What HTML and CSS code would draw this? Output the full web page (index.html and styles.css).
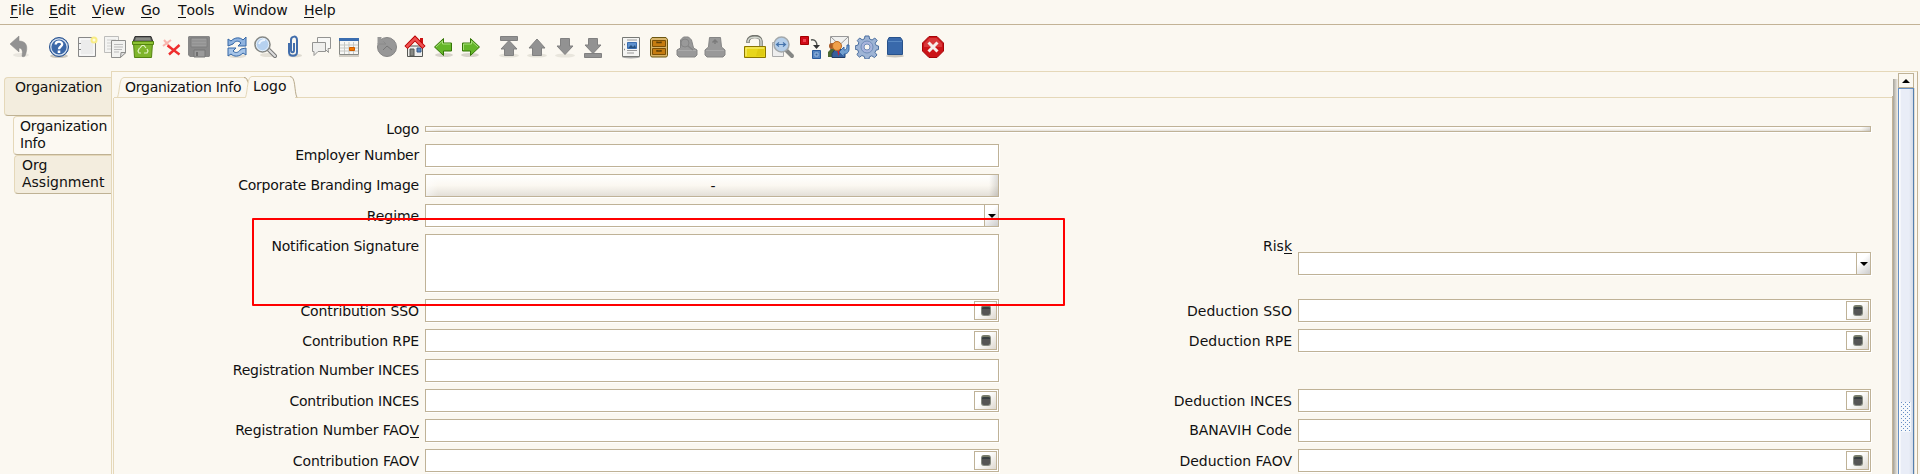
FILE: index.html
```html
<!DOCTYPE html>
<html lang="en">
<head>
<meta charset="utf-8">
<title>Organization</title>
<link rel="stylesheet" href="styles.css">
</head>
<body>
<nav class="menubar">
<span class="m1"><u>F</u>ile</span><span class="m2"><u>E</u>dit</span><span class="m3"><u>V</u>iew</span><span class="m4"><u>G</u>o</span><span class="m5"><u>T</u>ools</span><span class="m6">Window</span><span class="m7"><u>H</u>elp</span>
</nav>
<div class="toolbar">
<svg viewBox="0 0 24 24"><ellipse cx="14" cy="20" rx="8" ry="2" fill="#e9e6df"/><path d="M3 9 12 1v5c7 0 10 5 6 15-1 1-3 1-3 0 1-5 0-8-3-8v4z" fill="#929292" stroke="#858585" stroke-width=".5"/></svg>
<svg class="sep" viewBox="0 0 24 24"><ellipse cx="12" cy="21" rx="9" ry="2" fill="#ccc8be"/><circle cx="12" cy="12" r="9.5" fill="#3c68a8" stroke="#2b5591"/><circle cx="12" cy="12" r="8.2" fill="none" stroke="#dce6f2" stroke-width="1.2"/><path d="M8.7 9.5C8.8 5.7 15.2 5.8 15.2 9.3c0 2.2-3.2 2.3-3.2 5" fill="none" stroke="#fff" stroke-width="2.3"/><path d="M10.7 15.5h2.6V18h-2.6z" fill="#fff"/></svg>
<svg viewBox="0 0 24 24"><path d="M3.500 2.500h17v19h-17z" fill="#ececec" stroke="#888"/><path d="M5 4h14v16H5z" fill="none" stroke="#fff"/><path d="M5 8v1M5 14v1" stroke="#888" stroke-width="2"/><circle cx="19" cy="5" r="3.500" fill="#f8ec85"/><circle cx="19" cy="5" r="1.500" fill="#fffbe0"/></svg>
<svg viewBox="0 0 24 24"><path d="M1.500 1.500h14v16h-14z" fill="#f4f4f2" stroke="#bdbdbb"/><path d="M4 5h9M4 8h5M4 11h4M4 14h4" stroke="#d0d0ce"/><path d="M8.500 5.500h14v12l-5 5h-9z" fill="#f2f2f0" stroke="#8f8f8d"/><path d="M11 9.500h9M11 12h9M11 14.500h8M11 17h5" stroke="#bbb"/><path d="m17.500 22.500.500-5h5z" fill="#ddd" stroke="#8f8f8d"/></svg>
<svg viewBox="0 0 24 24"><path d="M2.500 8h19l-1 14.500h-17z" fill="#7fb52b" stroke="#548410"/><path d="M4 1.500h16l2 5.500H2z" fill="#555753" stroke="#333"/><path d="M5 2.500h14l1 3H4z" fill="#888a85"/><path d="M1.500 6.500h21v3h-21z" fill="#8dc134" stroke="#548410"/><path d="m9 13 2-2.500h2l2 2.500m1 1 1 2-1 2h-3m-3 0H8l-1-2 1.500-3" fill="none" stroke="#e2f2c3" stroke-width="1.200"/></svg>
<svg viewBox="0 0 24 24"><path d="m5 5 7 8M12 5 4 11" stroke="#f9b5ad" stroke-width="2"/><path d="m8.500 10.500 12 9M20.500 10 10 19.500" stroke="#ef2e2e" stroke-width="2.400"/></svg>
<svg viewBox="0 0 24 24"><path d="M2 1h20l1 1v19l-1 1H3l-2-2V2z" fill="#888"/><path d="M4 3h16v9H4z" fill="#9d9d9d" stroke="#7c7c7c"/><path d="M5 6h14M5 9h14" stroke="#8b8b8b"/><path d="M7 15h11v7H7z" fill="#9b9b9b" stroke="#777"/><path d="M9 17h2v4H9z" fill="#6f6f6f"/></svg>
<svg class="sep2" viewBox="0 0 24 24"><ellipse cx="12" cy="21" rx="9" ry="2" fill="#e4e0d6"/><path d="M3 11V4l3 2c4-4 9-4 12-1l3-3v9h-8l3-3c-3-3-6-2-8 1z" fill="#8fb3df" stroke="#3466a5"/><path d="M21 13v7l-3-2c-4 4-9 4-12 1l-3 2v-8h8l-3 3c3 3 6 1 8-2z" fill="#a5c4e8" stroke="#3466a5"/></svg>
<svg viewBox="0 0 24 24"><ellipse cx="15" cy="20" rx="8" ry="2" fill="#e4e0d6"/><path d="m15 14 7 7" stroke="#777" stroke-width="4" stroke-linecap="round"/><path d="m15 14 7 7" stroke="#ddd" stroke-width="2" stroke-linecap="round"/><circle cx="9.500" cy="9.500" r="7.500" fill="#b6d1ef" stroke="#868884" stroke-width="1.600"/><circle cx="9.500" cy="9.500" r="6.200" fill="none" stroke="#e5effa"/><path d="M6 9c1-3 3-4 6-4" stroke="#edf5ff" stroke-width="2" fill="none"/></svg>
<svg viewBox="0 0 24 24"><ellipse cx="14" cy="20.500" rx="7" ry="1.800" fill="#dedad0"/><path d="M8 8v9c0 5 8 5 8 0V5c0-5-6-4-6 0v10c0 3 3 3 3 0V8" fill="none" stroke="#426eac" stroke-width="2"/></svg>
<svg viewBox="0 0 24 24"><path d="M8.500 2.500h13v11H19l.500 4-4-4h-7z" fill="#f8f8f6" stroke="#949492"/><path d="M3.500 7.500h13v9H9l-4 4v-4H3.500z" fill="#efefed" stroke="#949492"/></svg>
<svg viewBox="0 0 24 24"><path d="M2 20h20v2H2z" fill="#d2cec5"/><path d="M2.500 3.500h19v16h-19z" fill="#f7f7f5" stroke="#888a85"/><path d="M2 3h20v3H2z" fill="#3b6daf"/><path d="M3 10h18M3 13h18M3 16h18M7.500 7v12M12 7v12M16.500 7v12" stroke="#c5c7c3"/><path d="M12.500 12.500h5v3h-5z" fill="#f57900" stroke="#ce5c00"/></svg>
<svg class="sep2" viewBox="0 0 24 24"><circle cx="12" cy="12" r="9.500" fill="#979797" stroke="#858585"/><path d="M2.500 2h4v4l4 3H2.500z" fill="#979797"/><path d="M4 9h7L8.500 6.500" fill="none" stroke="#8a8a8a"/><path d="m8 15 4-4 5 4" fill="none" stroke="#777"/></svg>
<svg viewBox="0 0 24 24"><path d="M4.500 11h15v10.500h-15z" fill="#eeeeec" stroke="#555753"/><path d="M17 3h3v5h-3z" fill="#cc1111"/><path d="m3 12.500 9-9 9 9" fill="none" stroke="#b90000" stroke-width="4.500"/><path d="m3.500 12 8.500-8.500 8.500 8.500" fill="none" stroke="#ef5050" stroke-width="2.500"/><path d="M7 14h4v7H7z" fill="#888a85" stroke="#555753"/><path d="M14 13h4v4h-4z" fill="#5a87bd" stroke="#395a88"/></svg>
<svg viewBox="0 0 24 24"><ellipse cx="13" cy="20" rx="9" ry="2" fill="#d7d3ca"/><path d="m3.500 12 9-8.500V8h8v8h-8v4.500z" fill="#64b629" stroke="#347607"/><path d="m5 12 6.500-6v3h8" fill="none" stroke="#a8df7c"/></svg>
<svg viewBox="0 0 24 24"><ellipse cx="11" cy="20" rx="9" ry="2" fill="#d7d3ca"/><path d="m20.500 12-9-8.500V8h-8v8h8v4.500z" fill="#64b629" stroke="#347607"/><path d="M4.500 15V9h8V6l6.500 6" fill="none" stroke="#a8df7c"/></svg>
<svg class="sep2" viewBox="0 0 24 24"><ellipse cx="12" cy="20.500" rx="10" ry="2" fill="#e6e3da"/><path d="M3.500 1.500h17v4h-17zM12 5.500l8 8.500h-3.500v6.500h-9V14H4z" fill="#929292" stroke="#818181"/></svg>
<svg viewBox="0 0 24 24"><ellipse cx="12" cy="20.500" rx="10" ry="2" fill="#e6e3da"/><path d="m12 4 8 9h-3.500v7.500h-9V13H4z" fill="#929292" stroke="#818181"/></svg>
<svg viewBox="0 0 24 24"><ellipse cx="12" cy="20.500" rx="10" ry="2" fill="#e9e6dd"/><path d="m12 19.500 8-8.500h-3.500V3.500h-9V11H4z" fill="#929292" stroke="#818181"/></svg>
<svg viewBox="0 0 24 24"><path d="M3.500 18.500h17v4h-17zM12 18.500l8-8.500h-3.500V3.500h-9V10H4z" fill="#929292" stroke="#818181"/></svg>
<svg class="sep2" viewBox="0 0 24 24"><ellipse cx="12" cy="22" rx="9" ry="1.500" fill="#aaa"/><path d="M3.500 2.500h17v19h-17z" fill="#f5f5f3" stroke="#777975"/><path d="M5 9.500h1M5 14.500h1" stroke="#888" stroke-width="1.500"/><path d="M8 5h10M8 15.500h10M8 18h7" stroke="#999"/><path d="M8.500 7.500h9v6h-9z" fill="#5f91cd" stroke="#3b6daf"/><path d="m9 13 3-3 2 2 2-2 1 3z" fill="#27517f"/></svg>
<svg viewBox="0 0 24 24"><path d="M5 2.500h14l1.500 2v16l-1 1.500h-15l-1-1.500v-16z" fill="#d8b56b" stroke="#6c5711"/><path d="M5.500 5.500h13v6h-13zM5.500 13.500h13v6h-13z" fill="#c67c10" stroke="#7b5006"/><path d="M10 6.500v1h4v-1M10 15v1h4v-1" fill="none" stroke="#604004" stroke-width="1.500"/></svg>
<svg viewBox="0 0 24 24"><path d="M5.500 13V5l3-3h5l3 3 2 8 3.500 2v5l-2 2H4l-2-2v-5z" fill="#999" stroke="#858585"/><path d="M3 15.500h18" stroke="#aaa"/><circle cx="10" cy="8" r="4" fill="none" stroke="#858585"/><path d="m13 11 5 4" stroke="#858585" stroke-width="1.500"/></svg>
<svg viewBox="0 0 24 24"><path d="M5.500 12 6.500 2.500h11l1 9.500 3.500 3v5l-2 2H4l-2-2v-5z" fill="#999" stroke="#858585"/><path d="M3 15.500h18" stroke="#aaa"/><path d="M12 9V5M9.500 7.500 12 5l2.500 2.500" fill="none" stroke="#7b7b7b" stroke-width="1.500"/></svg>
<svg class="sep" viewBox="0 0 24 24"><path d="M5 8V6c1-6 13-6 13 0v6" fill="none" stroke="#73756f" stroke-width="3.500"/><path d="M5 7.500V6c1-5 13-5 13 0v6" fill="none" stroke="#d3d7cf" stroke-width="1.500"/><path d="M1.500 11.500h21v11h-21z" fill="#e8d61b" stroke="#8a7500"/><path d="M3 13h18M3 13v8" stroke="#fbf28a" fill="none"/><path d="M15 14h6v7h-8z" fill="#d6bf0a" opacity=".5"/></svg>
<svg viewBox="0 0 24 24"><path d="M1.500 7.500h11v14h-11z" fill="#eee" stroke="#aaa"/><path d="m15 15 6 6" stroke="#858785" stroke-width="4" stroke-linecap="round"/><circle cx="10.500" cy="9.500" r="7.500" fill="#b6cfe9" stroke="#a4a9ab" stroke-width="1.500"/><path d="M5.500 9.500h9M8 7.500l-2.500 2 2.500 2M12 7.500l2.500 2-2.500 2" fill="none" stroke="#4674ac" stroke-width="1.200"/></svg>
<svg viewBox="0 0 24 24"><path d="M1.500 1.500h8v8h-8z" fill="#d00b18" stroke="#a40000"/><path d="M4 4h3v3H4z" fill="#ef4350"/><path d="M13.500 15.500h8v8h-8z" fill="#5686c2" stroke="#285a9c"/><path d="M16 18h3v3h-3z" fill="#3465a4" stroke="#9cbce0"/><path d="M12 5c4-1 6 2 6 6" fill="none" stroke="#555753" stroke-width="1.500"/><path d="M14 10h7l-3.500 4z" fill="#333"/></svg>
<svg viewBox="0 0 24 24"><path d="M3.500 1.500h18v14h-18z" fill="#f1f1ef" stroke="#999"/><path d="m4 2 8.500 8L21 2" fill="none" stroke="#999"/><circle cx="5" cy="11" r="3" fill="#a85b27"/><path d="M1 22v-5l3-3h4v8z" fill="#4b6831"/><path d="M5 22.500v-4l3-4h7l3 4v4z" fill="#365f9d" stroke="#233d66"/><path d="m10 15 1.500 6 2-6z" fill="#c52432"/><circle cx="10" cy="11" r="4.500" fill="#efa04b" stroke="#b96a22"/><path d="M22 10v4c0 4-3 5-5 5v3l-5-5 5-5v3c2 0 3-1 3-5z" fill="#729fcf" stroke="#3465a4"/></svg>
<svg viewBox="0 0 24 24"><path d="m10 1 4 0 .6 3 2.500 1 2.700-2 2.400 2.500-2 2.700 1 2.300 2.300.5v3.500l-2.500.7-1 2.200 2 2.600-2.500 2.600-2.700-1.800-2.300 1-.5 2.200h-4l-.7-2.500-2.400-1-2.400 1.700-2.600-2.600 1.700-2.500-1-2.300-2.300-.500v-3.500l2.500-.6 1-2.400L2.300 5.500 4.700 3l2.500 1.800 2.200-1z" fill="#9eb4d5" stroke="#4b6f9f"/><circle cx="12" cy="12" r="6" fill="#a7b4dc" stroke="#708db8"/><circle cx="12" cy="12" r="3" fill="#fbf8f1" stroke="#708db8"/></svg>
<svg viewBox="0 0 24 24"><ellipse cx="12" cy="21" rx="9" ry="1.500" fill="#c8c4bb"/><path d="m6 2.500-1.500 3v14h15v-14l-2-3z" fill="#3969ab" stroke="#28528b"/><path d="M5 6.500h14" stroke="#5989c3"/></svg>
<svg class="sep2" viewBox="0 0 24 24"><path d="M8 1.500h8l6.500 6.500v8L16 22.500H8L1.500 16V8z" fill="#cc1418" stroke="#a60509"/><path d="M8.500 3h7l5.500 5.500V12H3V8.500z" fill="#e15558" opacity=".55"/><path d="m7.500 7.500 9 9m0-9-9 9" stroke="#f5efec" stroke-width="3"/></svg>
</div>
<main class="workspace">
<aside class="sidetabs">
<div class="side one">Organization</div>
<div class="side two">Organization<br>Info</div>
<div class="side three">Org<br>Assignment</div>
</aside>
<section class="panel">
<div class="content">
<div class="tabs">
<svg class="tabart" width="186" height="26" viewBox="0 0 186 26"><path d="M1 25.500h3M4.500 25.500C7 18 6 5.500 11 5.500H131C134 6 134.500 8 135 11" fill="none" stroke="#e5d8b9"/><path d="M1 25.500H132.500C135 18 134 4.500 139 4.500h38" fill="none" stroke="#e5d8b9"/><path d="M177 4.500c6 0 4 15 7 21M131 5.500c2 0 3 1 3.500 4" fill="none" stroke="#b8aa8c"/></svg>
<span class="t1">Organization Info</span><span class="t2">Logo</span>
</div>
<div class="form">
<label class="logo">Logo</label><i class="field button thin"></i>
<label>Employer Number</label><i class="field"></i>
<label>Corporate Branding Image</label><i class="field button">-</i>
<label class="low short">Regime</label><i class="field"><b class="arrow"></b></i>
<label class="low">Notification Signature</label><i class="field area"></i><label class="right low">Ris<u>k</u></label><i class="field risk"><b class="arrow"></b></i>
<label class="low short">Contribution SSO</label><i class="field"><b class="db"></b></i><label class="right low">Deduction SSO</label><i class="field"><b class="db"></b></i>
<label class="low short">Contribution RPE</label><i class="field"><b class="db"></b></i><label class="right low">Deduction RPE</label><i class="field"><b class="db"></b></i>
<label>Registration Number INCES</label><i class="field"></i>
<label class="low">Contribution INCES</label><i class="field"><b class="db"></b></i><label class="right low">Deduction INCES</label><i class="field"><b class="db"></b></i>
<label class="short">Registration Number FAO<u>V</u></label><i class="field"></i><label class="right">BANAVIH Code</label><i class="field"></i>
<label class="low short">Contribution FAOV</label><i class="field"><b class="db"></b></i><label class="right low">Deduction FAOV</label><i class="field"><b class="db"></b></i>
</div>
</div>
<div class="edge"></div>
<div class="scrollbar"><div class="up"></div><div class="thumb"><div class="grip"></div></div></div>
</section>
</main>
<div class="highlight"></div>
</body>
</html>
```
FILE: styles.css
```css
*, *::after { box-sizing: border-box; }
body { margin: 0; width: 1920px; height: 474px; overflow: hidden; background: #fbf8f1; color: #111; font: 14px/17px "DejaVu Sans", sans-serif; position: relative; }
u { text-decoration: none; border-bottom: 1px solid #111; display: inline-block; height: 16px; line-height: 17px; }
.menubar { display: grid; grid-template-columns: 39px 43px 49px 37px 55px 71px 60px; padding: 2px 0 0 10px; height: 25px; border-bottom: 1px solid #c3b396; white-space: nowrap; letter-spacing: -.1px; }
.toolbar { display: flex; gap: 4px; padding: 10px 0 0 7px; height: 46px; }
.toolbar svg { width: 24px; height: 24px; flex: none; }
.toolbar .sep { margin-left: 12px; }
.toolbar .sep2 { margin-left: 10px; }
.workspace { display: flex; height: 403px; }
.sidetabs { width: 111px; padding-top: 6px; display: flex; flex-direction: column; align-items: flex-end; gap: 0; flex: none; letter-spacing: -.2px; }
.side { border: 1px solid #e5d8b9; border-right: 0; border-bottom-color: #bfb294; border-radius: 4px 0 0 4px; height: 39px; background: #f3edde; padding: 1px 0 0 7px; white-space: nowrap; }
.one { width: 107px; padding-left: 10px; }
.two { width: 98px; background: #fcf9f2; padding-left: 6px; }
.three { width: 97px; letter-spacing: 0; }
.panel { width: 1807px; border: 1px solid #e5d8b9; border-right-color: #c3b396; border-bottom: 0; display: flex; }
.content { width: 1781px; flex: none; padding-left: 1px; border-right: 1px solid #c3b396; border-image: linear-gradient(transparent 25px, #c3b396 25px) 1; border-width: 0 1px 0 0; }
.tabs { height: 26px; position: relative; display: flex; background: linear-gradient(#e5d8b9, #e5d8b9) 182px 25px / 1598px 1px no-repeat; }
.tabart { position: absolute; left: 0; top: 0; }
.tabs span { position: relative; white-space: nowrap; }
.t1 { margin: 7px 0 0 12px; width: 128px; letter-spacing: -.25px; }
.t2 { margin-top: 6px; }
.form { border-left: 1px solid #e5d8b9; height: 376px; padding-top: 28px; display: grid; grid-template-columns: 305px 574px 287px 573px; column-gap: 6px; row-gap: 7px; grid-template-rows: 11px 23px 23px 23px 58px 23px 23px 23px 23px 23px 23px; }
label { grid-column: 1; text-align: right; white-space: nowrap; padding-top: 3px; height: 20px; letter-spacing: -.22px; }
label.right { grid-column: 3; letter-spacing: 0; }
label.low { padding-top: 4px; }
label.short { letter-spacing: -.1px; }
label.logo { margin-top: -8px; }
.field { border: 1px solid #bfb297; background: #fff; box-shadow: 1px 1px #fff; font-style: normal; text-align: center; display: flex; justify-content: flex-end; height: 23px; }
.area { height: 58px; }
.risk { margin-top: 18px; }
.button { background: linear-gradient(90deg, #fff8, #0000 12px calc(100% - 9px), #0002), linear-gradient(#fff, #fbf8f1 50%, #e3dfd8); justify-content: center; line-height: 22px; padding-left: 2px; }
.thin { grid-column: 2 / 5; height: 6px; }
.arrow { width: 14px; border-left: 1px solid #bfb297; background: linear-gradient(135deg, #fff 35%, #ccc); display: flex; align-items: center; justify-content: center; }
.arrow::after { content: ""; border: 4px solid transparent; border-top: 4px solid #000; border-bottom: 0; }
.db { width: 23px; height: 19px; margin: 1px; border: 1px solid #bfb297; background: linear-gradient(135deg, #fff 40%, #ddd8cf); display: flex; justify-content: center; }
.db::after { content: ""; margin-top: 3px; width: 10px; height: 11px; border: 1px solid #858a80; border-top: 2px solid #777b69; border-radius: 3px; background: linear-gradient(#383f41 2px, #555 2px); }
.edge { width: 5px; margin-top: 7px; background: linear-gradient(90deg, #a3a198, #d6d2ca 60%, #f4f1ea); }
.scrollbar { width: 16px; margin-top: 1px; }
.up { height: 15px; border: 1px solid #bfb297; background: #fbf8f1; display: flex; align-items: center; justify-content: center; }
.up::after { content: ""; border: 4px solid transparent; border-bottom: 4px solid #000; border-top: 0; }
.thumb { height: 390px; border: 1px solid #6690c5; border-right-color: #557fae; background: linear-gradient(90deg, #fff 1px, #e9edf7 2px 10px, #d3dae7); padding: 313px 2px 0; box-shadow: 1px 0 #dedbd3; }
.grip { height: 30px; width: 10px; background: radial-gradient(circle at .5px .5px, #678ec4 .7px, transparent .8px) 0 0 / 4px 4px, radial-gradient(circle at .5px .5px, #678ec4 .7px, transparent .8px) 2px 2px / 4px 4px, #f5f8fc; }
.highlight { position: absolute; left: 252px; top: 218px; width: 813px; height: 88px; border: 2px solid #f00; border-radius: 1px; }
```
